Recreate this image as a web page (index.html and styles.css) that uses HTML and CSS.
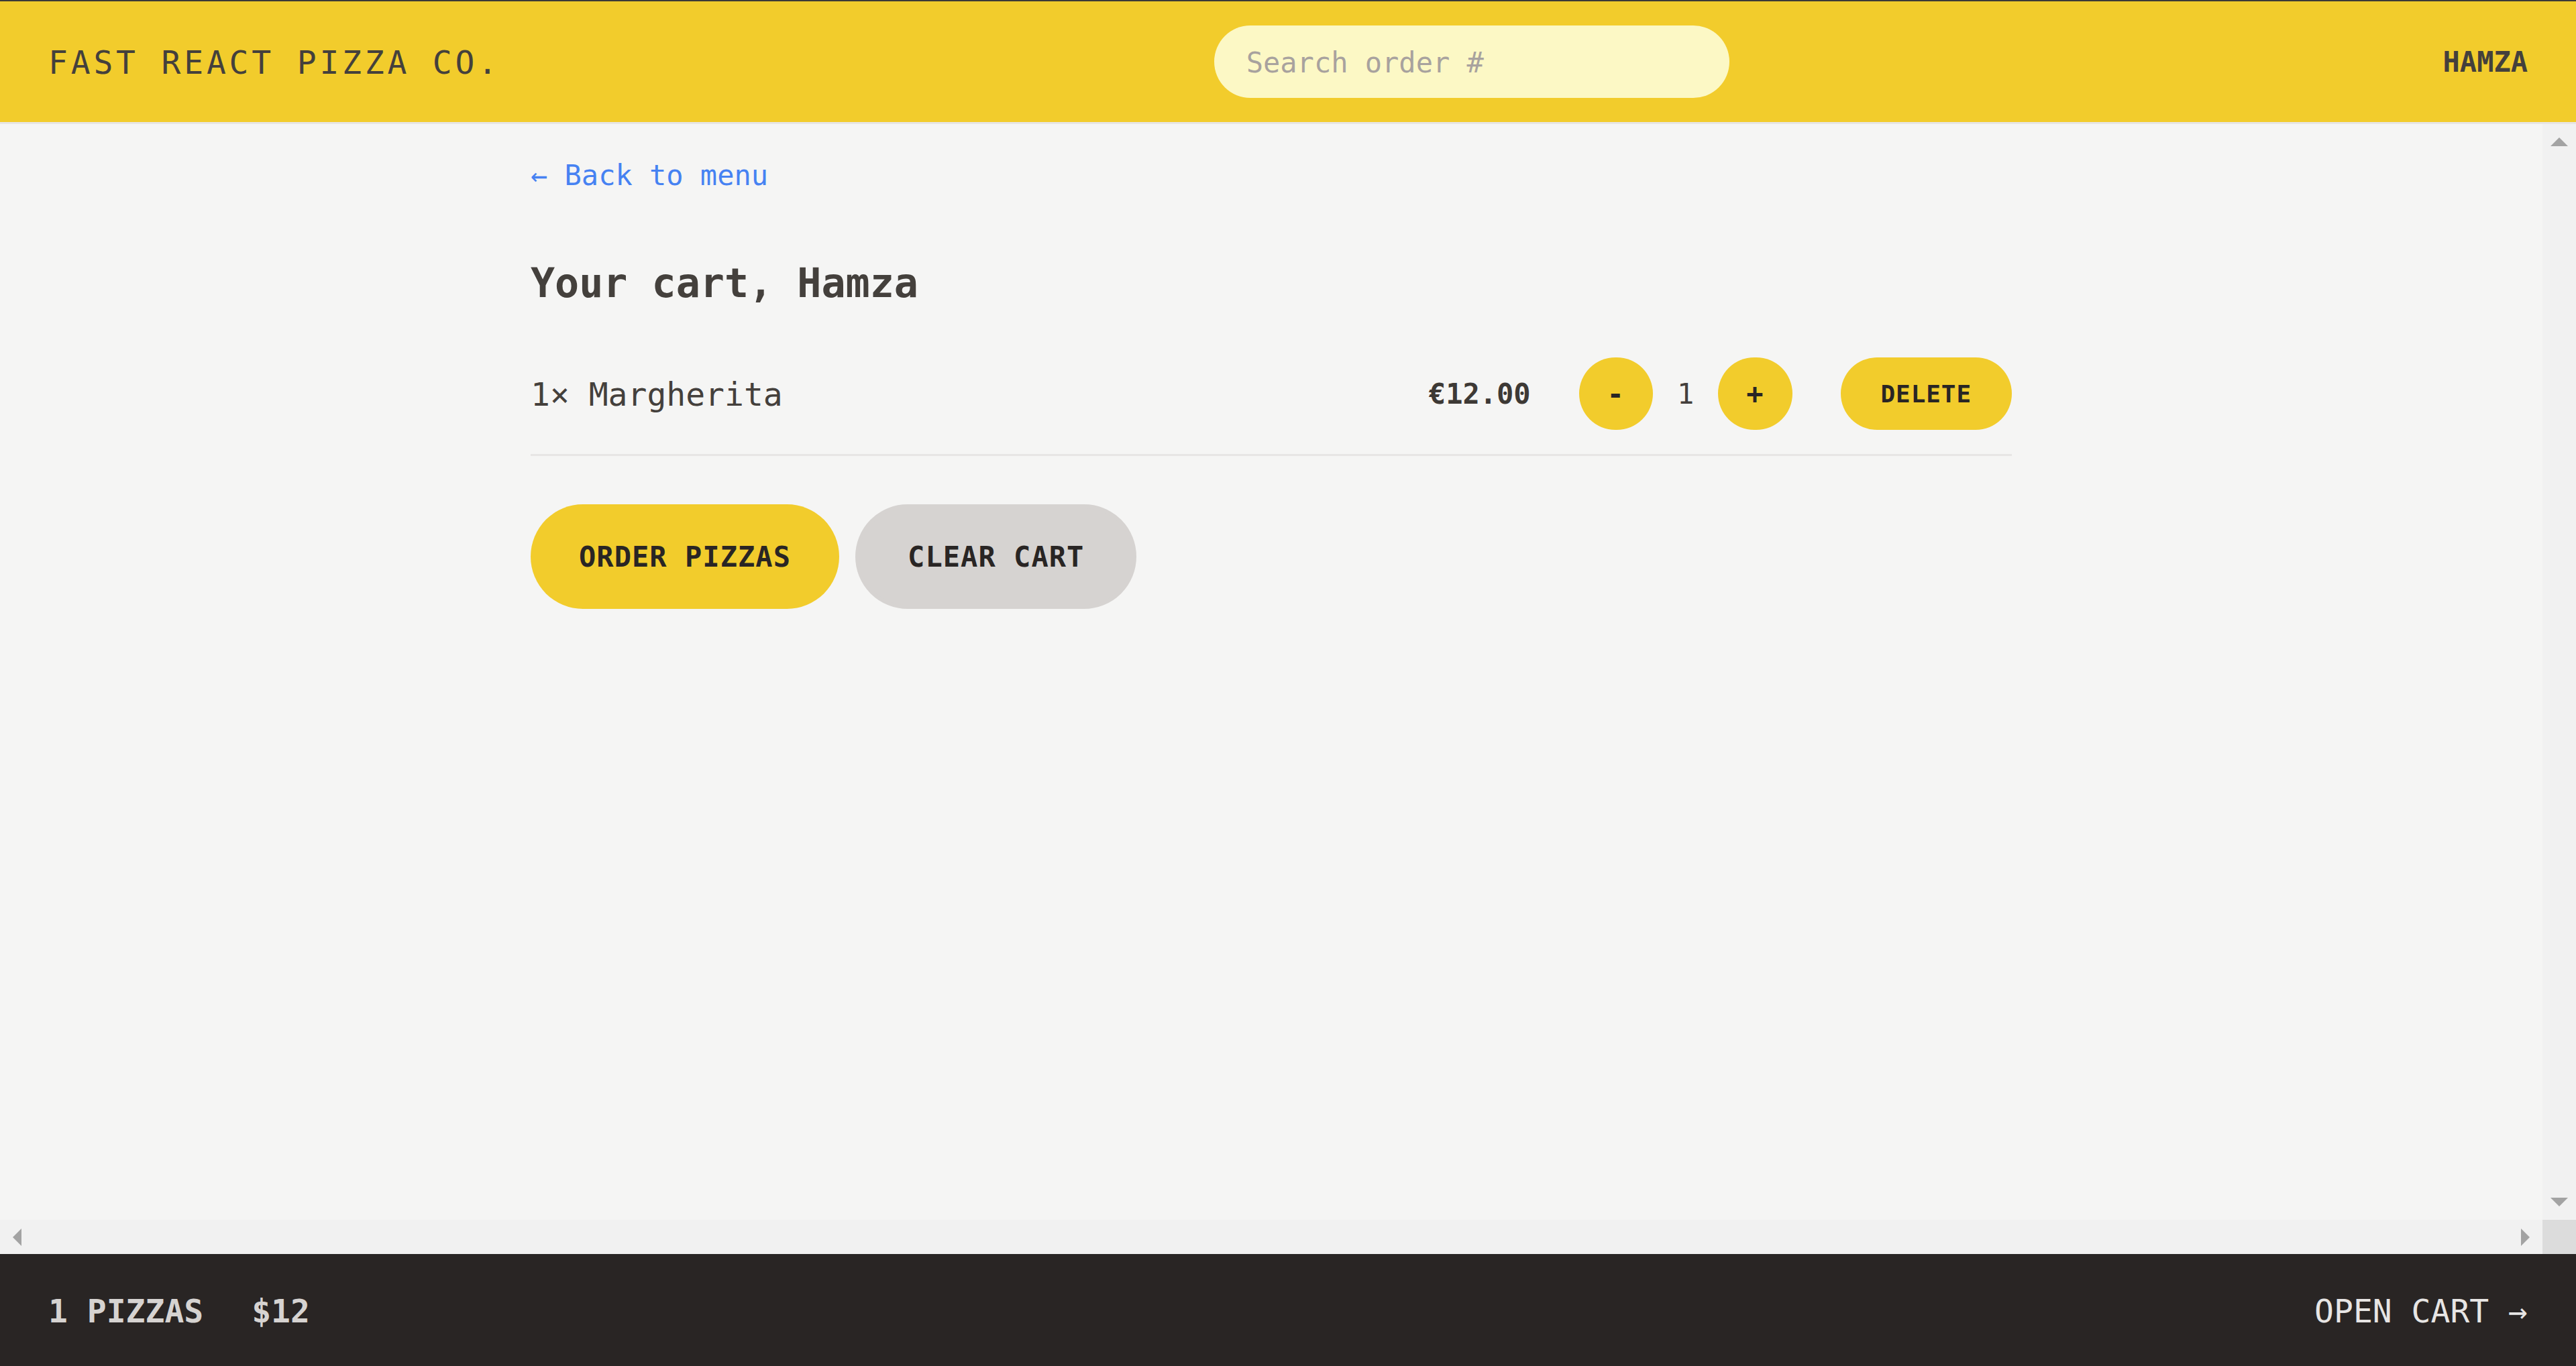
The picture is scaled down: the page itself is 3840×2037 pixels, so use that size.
FILE: index.html
```html
<!DOCTYPE html>
<html lang="en">
<head>
<meta charset="utf-8">
<title>Fast React Pizza Co.</title>
<link rel="stylesheet" href="styles.css">
</head>
<body>
<div class="app">
  <header class="header">
    <a class="logo" href="#">Fast React Pizza Co.</a>
    <form class="search">
      <input class="search-input" type="text" placeholder="Search order #">
    </form>
    <div class="username">Hamza</div>
  </header>

  <div class="viewport">
    <main class="main">
      <div class="container">
        <div class="cart">
          <div class="back-row"><a class="link" href="#">&larr; Back to menu</a></div>
          <h2 class="cart-title">Your cart, Hamza</h2>
          <ul class="cart-list">
            <li class="cart-item">
              <p class="item-name">1&times; Margherita</p>
              <div class="item-controls">
                <p class="item-price">€12.00</p>
                <div class="qty">
                  <button class="btn btn-round" type="button">-</button>
                  <span class="qty-value">1</span>
                  <button class="btn btn-round" type="button">+</button>
                </div>
                <button class="btn btn-small" type="button">Delete</button>
              </div>
            </li>
          </ul>
          <div class="actions">
            <a class="btn btn-primary" href="#">Order pizzas</a>
            <button class="btn btn-secondary" type="button">Clear cart</button>
          </div>
        </div>
      </div>
    </main>
    <div class="vbar">
      <svg class="arrow-v" width="26" height="13" viewBox="0 0 26 13"><polygon points="13,0 26,13 0,13" fill="#a3a3a3"/></svg>
      <svg class="arrow-v" width="26" height="13" viewBox="0 0 26 13"><polygon points="0,0 26,0 13,13" fill="#a3a3a3"/></svg>
    </div>
    <div class="hbar">
      <svg class="arrow-h" width="13" height="26" viewBox="0 0 13 26"><polygon points="13,0 13,26 0,13" fill="#a3a3a3"/></svg>
      <svg class="arrow-h" width="13" height="26" viewBox="0 0 13 26"><polygon points="0,0 13,13 0,26" fill="#a3a3a3"/></svg>
    </div>
    <div class="corner"></div>
  </div>

  <footer class="footer">
    <p class="overview">
      <span>1 pizzas</span>
      <span>$12</span>
    </p>
    <a class="open-cart" href="#">Open cart &rarr;</a>
  </footer>
</div>
</body>
</html>
```

FILE: styles.css
```css
* {
  box-sizing: border-box;
}

html,
body {
  margin: 0;
  padding: 0;
  height: 100%;
}

body {
  font-family: "DejaVu Sans Mono", "Liberation Mono", monospace;
  background: #f5f5f4;
  color: #44403c;
}

.app {
  height: 100vh;
  display: grid;
  grid-template-rows: auto 1fr auto;
  border-top: 2px solid #3c3a37;
}

/* ---------- header ---------- */
.header {
  display: flex;
  align-items: center;
  justify-content: space-between;
  padding: 36px 72px;
  background: #f2cc2c;
  border-bottom: 3px solid #e7e5e4;
  text-transform: uppercase;
}

.logo {
  font-size: 48px;
  line-height: 72px;
  letter-spacing: 4.8px;
  color: #44403c;
  text-decoration: none;
  padding-top: 2px;
}

.search {
  margin: 0;
}

.search-input {
  display: block;
  width: 768px;
  height: 108px;
  padding: 2px 48px 0;
  border: none;
  border-radius: 9999px;
  background: #fcf8c5;
  font-family: inherit;
  font-size: 42px;
  color: #44403c;
  outline: none;
}

.search-input::placeholder {
  color: #a8a29e;
}

.username {
  font-size: 42px;
  line-height: 60px;
  font-weight: 700;
  color: #44403c;
  padding-top: 2px;
}

/* ---------- scroll viewport ---------- */
.viewport {
  display: grid;
  grid-template-columns: 1fr 50px;
  grid-template-rows: 1fr 51px;
  min-height: 0;
}

.main {
  overflow: hidden;
  min-width: 0;
}

.container {
  max-width: 2304px;
  margin: 0 auto;
}

.vbar {
  background: #f1f1f1;
  display: flex;
  flex-direction: column;
  justify-content: space-between;
  align-items: center;
  padding: 20px 0;
}

.hbar {
  background: #f1f1f1;
  display: flex;
  justify-content: space-between;
  align-items: center;
  padding: 0 19px;
}

.arrow-v,
.arrow-h {
  display: block;
}

.corner {
  background: #dcdcdc;
}

/* ---------- cart ---------- */
.cart {
  padding: 36px 48px;
}

.back-row {
  font-size: 48px;
  line-height: 72px;
  padding-top: 2px;
  height: 72px;
}

.link {
  font-size: 42px;
  line-height: 60px;
  color: #4682f2;
  text-decoration: none;
}

.cart-title {
  margin: 84px 0 0;
  font-size: 60px;
  line-height: 84px;
  font-weight: 700;
  color: #44403c;
  padding-top: 3px;
  height: 84px;
}

.cart-list {
  list-style: none;
  margin: 36px 0 0;
  padding: 0;
  border-bottom: 3px solid #e7e5e4;
}

.cart-item {
  display: flex;
  align-items: center;
  justify-content: space-between;
  padding: 36px 0;
}

.item-name {
  margin: 0;
  font-size: 48px;
  line-height: 72px;
  color: #44403c;
  padding-top: 2px;
}

.item-controls {
  display: flex;
  align-items: center;
  gap: 72px;
}

.item-price {
  margin: 0;
  font-size: 42px;
  line-height: 60px;
  font-weight: 700;
  color: #3d3935;
  padding-top: 2px;
}

.qty {
  display: flex;
  align-items: center;
  gap: 36px;
}

.qty-value {
  font-size: 42px;
  line-height: 60px;
  color: #44403c;
  padding-top: 2px;
}

/* ---------- buttons ---------- */
.btn {
  display: inline-block;
  border: none;
  border-radius: 9999px;
  background: #f2cc2c;
  color: #292524;
  font-family: inherit;
  font-weight: 700;
  text-transform: uppercase;
  letter-spacing: 0.025em;
  text-decoration: none;
  cursor: pointer;
}

.btn-round {
  font-size: 42px;
  line-height: 60px;
  padding: 25px 42px 23px;
}

.btn-small {
  font-size: 36px;
  line-height: 48px;
  padding: 31px 60px 29px;
}

.actions {
  display: flex;
  gap: 24px;
  margin-top: 72px;
}

.btn-primary {
  font-size: 42px;
  line-height: 60px;
  padding: 49px 72px 47px;
}

.btn-secondary {
  font-size: 42px;
  line-height: 60px;
  padding: 43px 72px 41px;
  border: 6px solid #d6d3d1;
  background: #d6d3d1;
}

/* ---------- footer ---------- */
.footer {
  display: flex;
  align-items: center;
  justify-content: space-between;
  height: 167px;
  padding: 2px 72px 0;
  background: #292524;
  color: #e7e5e4;
  font-size: 48px;
  line-height: 72px;
  text-transform: uppercase;
}

.overview {
  margin: 0;
  display: flex;
  gap: 72px;
  font-weight: 700;
  color: #d6d3d1;
}

.open-cart {
  color: #e7e5e4;
  text-decoration: none;
}
```
